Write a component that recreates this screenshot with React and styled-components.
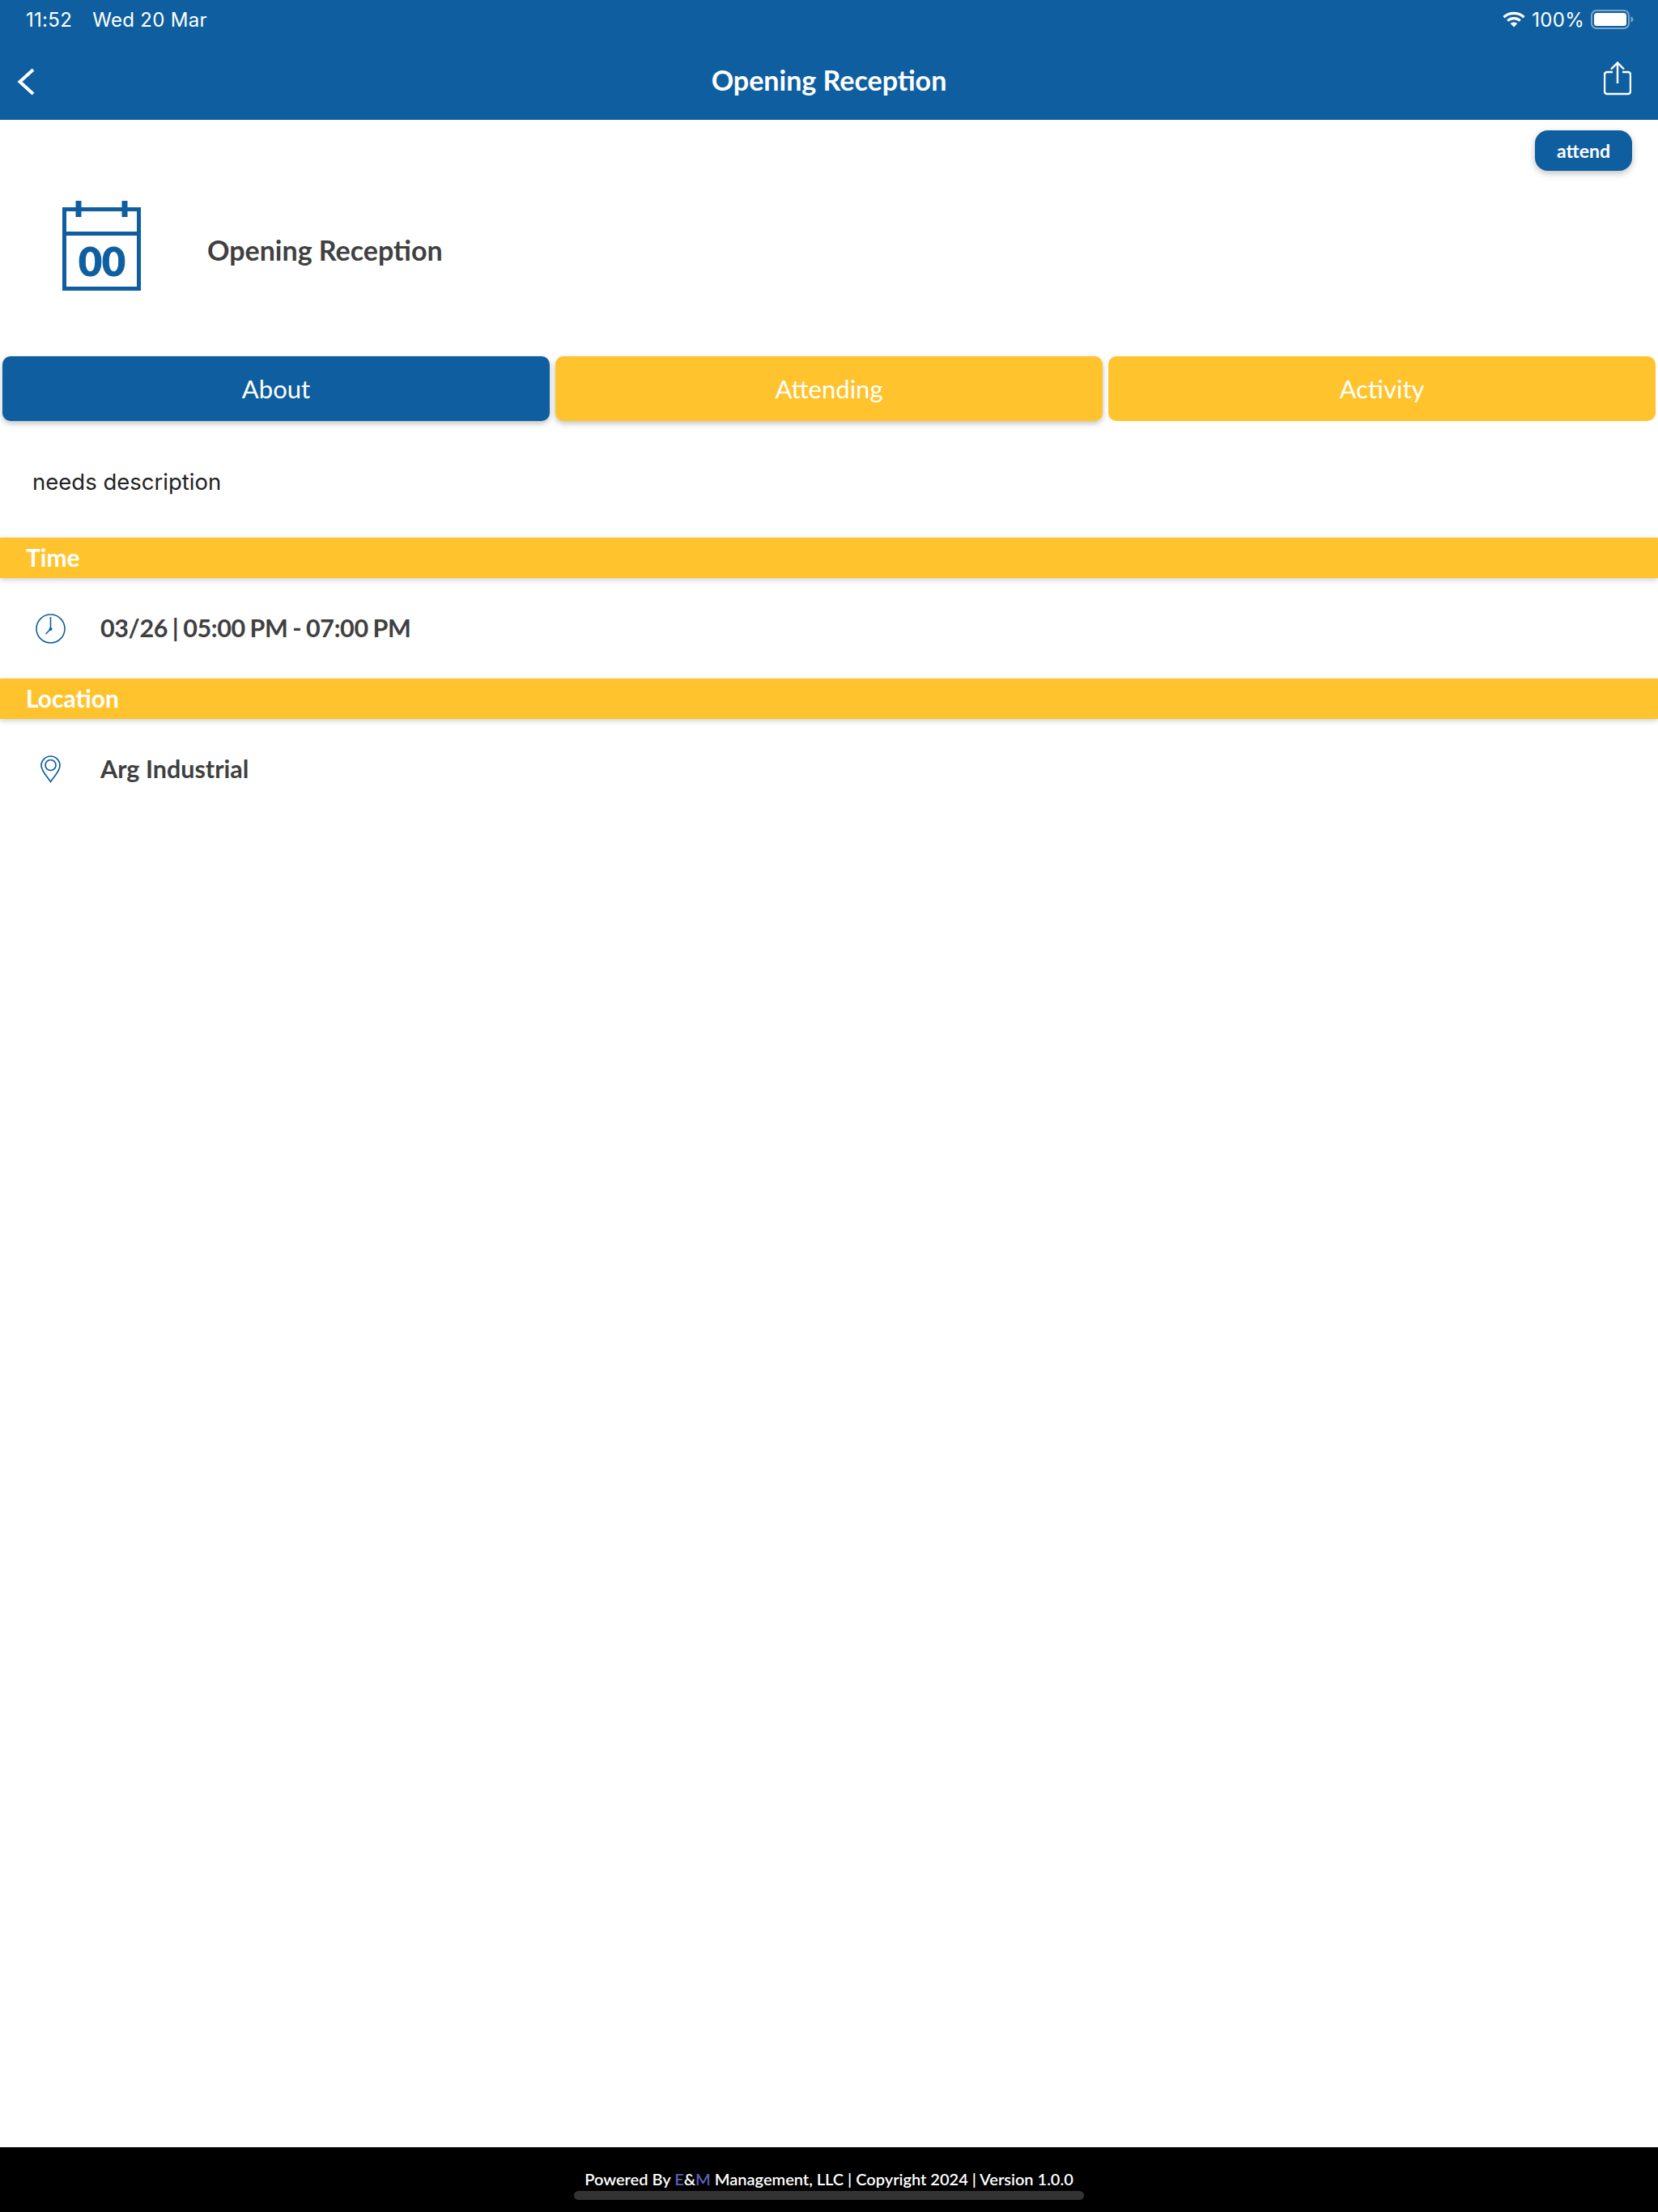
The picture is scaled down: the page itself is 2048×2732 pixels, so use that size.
import React from 'react';
import styled, { createGlobalStyle } from 'styled-components';

const BLUE = '#0f5fa0';
const YELLOW = '#ffc32d';

const GlobalStyle = createGlobalStyle`
    html, body {
        margin: 0;
        padding: 0;
        background-color: #fff;
    }
    * {
        box-sizing: border-box;
    }
`;

const CalendarIcon = () => (
    <CalendarWrap>
        <svg width="97" height="111" viewBox="0 0 97 111" fill="none" stroke={BLUE} strokeWidth="5">
            <rect x="2.5" y="10.5" width="92" height="98" />
            <path d="M2 40.5h93" />
            <path d="M20 0v20M77 0v20" strokeWidth="7" />
        </svg>
        <CalendarDay>00</CalendarDay>
    </CalendarWrap>
);

const ClockIcon = () => (
    <svg width="37" height="37" viewBox="0 0 37 37" fill="none" stroke={BLUE}>
        <circle cx="18.5" cy="18.5" r="17.5" strokeWidth="1.6" />
        <path d="M18.5 4v15M18.5 19l-6 6" strokeWidth="1.6" />
        <circle cx="18.5" cy="19" r="2" fill={BLUE} stroke="none" />
    </svg>
);

const PinIcon = () => (
    <svg width="25" height="34" viewBox="0 0 25 34" fill="none" stroke={BLUE} strokeWidth="1.7">
        <path d="M12.5 32.5C8 25.5 1 19.5 1 12.5a11.5 11.5 0 0 1 23 0c0 7-7 13-11.5 20z" />
        <circle cx="12.5" cy="12" r="6.5" />
    </svg>
);

const BackIcon = () => (
    <svg width="22" height="34" viewBox="0 0 22 34" fill="none" stroke="#fff" strokeWidth="4">
        <path d="M20 2L3.5 17 20 32" />
    </svg>
);

const ShareIcon = () => (
    <svg width="34" height="42" viewBox="0 0 34 42" fill="none" stroke="#fff" strokeWidth="2.4">
        <path d="M11 13H4a3 3 0 0 0-3 3v21a3 3 0 0 0 3 3h26a3 3 0 0 0 3-3V16a3 3 0 0 0-3-3h-7" />
        <path d="M17 27V2M9 9.5L17 1.5l8 8" />
    </svg>
);

const WifiIcon = () => (
    <svg width="28" height="20" viewBox="0 0 28 20" fill="none" stroke="#fff" strokeWidth="3.2">
        <path d="M1.5 7.2C8.5.8 19.500.8 26.500 7.200" />
        <path d="M6.200 11.600c4.500-4 11.100-4 15.600 0" />
        <path d="M14 19.500l-4.300-4.500c2.400-2 6.200-2 8.600 0z" fill="#fff" stroke="none" />
    </svg>
);

const BatteryIcon = () => (
    <svg width="53" height="24" viewBox="0 0 53 24" fill="none">
        <rect x="1" y="1" width="46" height="22" rx="6" stroke="#fff" strokeOpacity="0.45" strokeWidth="2" />
        <rect x="4" y="4" width="40" height="16" rx="3.500" fill="#fff" />
        <path d="M49.500 8.500c2 .5 3 2 3 3.500s-1 3-3 3.500z" fill="#fff" fillOpacity="0.45" />
    </svg>
);

const App = () => {
    return (
        <Page>
            <GlobalStyle />
            <Header>
                <StatusBar>
                    <StatusLeft>
                        <span>11:52</span>
                        <span>Wed 20 Mar</span>
                    </StatusLeft>
                    <StatusRight>
                        <WifiIcon />
                        <span>100%</span>
                        <BatteryIcon />
                    </StatusRight>
                </StatusBar>
                <NavBar>
                    <BackButton><BackIcon /></BackButton>
                    <NavTitle>Opening Reception</NavTitle>
                    <ShareButton><ShareIcon /></ShareButton>
                </NavBar>
            </Header>
            <AttendRow>
                <AttendButton>attend</AttendButton>
            </AttendRow>
            <Hero>
                <CalendarIcon />
                <HeroTitle>Opening Reception</HeroTitle>
            </Hero>
            <Tabs>
                <Tab $active $raised>About</Tab>
                <Tab $raised>Attending</Tab>
                <Tab>Activity</Tab>
            </Tabs>
            <Description>needs description</Description>
            <SectionBar>Time</SectionBar>
            <InfoRow>
                <InfoIcon><ClockIcon /></InfoIcon>
                <InfoText $tight>03/26 | 05:00 PM - 07:00 PM</InfoText>
            </InfoRow>
            <SectionBar>Location</SectionBar>
            <InfoRow>
                <InfoIcon><PinIcon /></InfoIcon>
                <InfoText>Arg Industrial</InfoText>
            </InfoRow>
            <Footer>
                <FooterText>
                    Powered By <Brand>E</Brand>&amp;<Brand>M</Brand> Management, LLC | Copyright 2024 | Version 1.0.0
                </FooterText>
                <HomeIndicator />
            </Footer>
        </Page>
    );
};

const Page = styled.div`
    width: 2048px;
    height: 2732px;
    display: flex;
    flex-direction: column;
    background-color: #fff;
    font-family: Lato, "Liberation Sans", sans-serif;
    overflow: hidden;
`;
const Header = styled.header`
    height: 148px;
    background-color: ${BLUE};
    color: #fff;
`;
const StatusBar = styled.div`
    height: 48px;
    padding: 0 30px 0 32px;
    display: flex;
    justify-content: space-between;
    align-items: center;
    font-family: Inter, sans-serif;
    font-size: 24px;
    letter-spacing: 0.3px;
`;
const StatusLeft = styled.div`
    display: flex;
    gap: 25px;
`;
const StatusRight = styled.div`
    display: flex;
    align-items: center;
    gap: 8px;
`;
const NavBar = styled.nav`
    height: 100px;
    padding: 0 33px;
    display: grid;
    grid-template-columns: 1fr auto 1fr;
    align-items: center;
`;
const BackButton = styled.div`
    display: flex;
    margin: 5px 0 0 -12px;
`;
const ShareButton = styled.div`
    display: flex;
    justify-content: flex-end;
    margin-bottom: 3px;
`;
const NavTitle = styled.h1`
    margin: 0;
    font-size: 34px;
    font-weight: 700;
    color: #fff;
`;
const AttendRow = styled.div`
    padding: 13px 32px 0 0;
    display: flex;
    justify-content: flex-end;
`;
const AttendButton = styled.button`
    width: 120px;
    height: 50px;
    border: none;
    border-radius: 16px;
    background-color: ${BLUE};
    color: #fff;
    font-family: Lato, sans-serif;
    font-size: 23px;
    font-weight: 700;
    box-shadow: 0 3px 8px rgba(0, 0, 0, 0.25);
`;
const Hero = styled.section`
    margin-top: 37px;
    padding-left: 77px;
    display: flex;
    align-items: center;
    gap: 82px;
`;
const CalendarWrap = styled.div`
    position: relative;
    width: 97px;
    height: 111px;
    svg {
        display: block;
    }
`;
const CalendarDay = styled.span`
    position: absolute;
    left: 1px;
    right: 0;
    top: 44px;
    text-align: center;
    font-size: 50px;
    line-height: 60px;
    font-weight: 900;
    color: ${BLUE};
    -webkit-text-stroke: 1px ${BLUE};
`;
const HeroTitle = styled.h2`
    margin: 9px 0 0;
    font-size: 34px;
    font-weight: 700;
    color: #404040;
`;
const Tabs = styled.div`
    margin-top: 81px;
    padding: 0 3px;
    display: grid;
    grid-template-columns: repeat(3, 1fr);
    gap: 7px;
`;
const Tab = styled.div`
    height: 80px;
    display: flex;
    justify-content: center;
    align-items: center;
    border-radius: 10px;
    background-color: ${(props) => (props.$active ? BLUE : YELLOW)};
    color: #fff;
    font-size: 31px;
    font-weight: 400;
    box-shadow: ${(props) => (props.$raised ? '0 3px 7px rgba(0, 0, 0, 0.25)' : 'none')};
`;
const Description = styled.p`
    margin: 0;
    height: 144px;
    padding: 6px 0 0 40px;
    display: flex;
    align-items: center;
    font-family: Inter, sans-serif;
    font-size: 27.5px;
    color: #222;
`;
const SectionBar = styled.div`
    height: 50px;
    padding: 0 0 2px 32px;
    display: flex;
    align-items: center;
    background-color: ${YELLOW};
    color: #fff;
    font-size: 30px;
    font-weight: 700;
    box-shadow: 0 2px 7px rgba(0, 0, 0, 0.2);
`;
const InfoRow = styled.div`
    height: 124px;
    padding: 0 0 0 44px;
    display: flex;
    align-items: center;
    gap: 43px;
`;
const InfoIcon = styled.div`
    width: 37px;
    display: flex;
    justify-content: center;
    svg {
        display: block;
    }
`;
const InfoText = styled.span`
    margin-bottom: 2px;
    font-size: 30.5px;
    font-weight: 700;
    color: #404040;
    letter-spacing: ${(props) => (props.$tight ? '-0.4px' : '0')};
    word-spacing: ${(props) => (props.$tight ? '-1.2px' : '0')};
`;
const Footer = styled.footer`
    position: relative;
    margin-top: auto;
    height: 80px;
    padding-top: 25px;
    background-color: #000;
    display: flex;
    justify-content: center;
`;
const FooterText = styled.div`
    font-size: 20px;
    line-height: 28px;
    font-weight: 600;
    color: #fff;
`;
const Brand = styled.span`
    color: #5a5fb5;
`;
const HomeIndicator = styled.div`
    position: absolute;
    left: 709px;
    top: 54px;
    width: 630px;
    height: 11px;
    border-radius: 6px;
    background-color: #333;
`;

export default App;
